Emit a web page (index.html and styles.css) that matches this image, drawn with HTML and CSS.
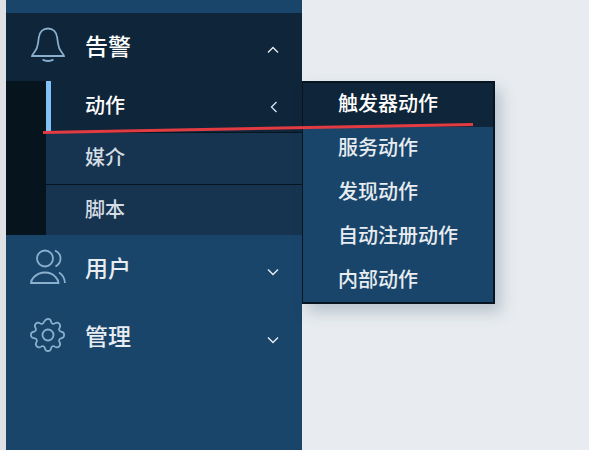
FILE: index.html
```html
<!DOCTYPE html>
<html lang="zh">
<head>
    <meta charset="UTF-8">
    <title>告警</title>
    <link rel="stylesheet" href="styles.css">
</head>
<body>
    <nav class="sidebar">
        <div class="menu-head open">
            <svg class="menu-icon" viewBox="0 0 36 36" fill="none">
                <path d="M2 29c0-1 1-2 2.200-3.500 2-2.500 3.300-5 3.800-9l.8-6C9.500 5 13 1.500 18 1.500S26.500 5 27.200 10.500l.8 6c.5 4 1.800 6.500 3.800 9 1.200 1.500 2.200 2.500 2.200 3.500H2z"/>
                <path d="M12.500 32.500c3 2 8 2 11 0"/>
            </svg>
            <span class="menu-title">告警</span>
            <svg class="chevron" viewBox="0 0 12 8" fill="none"><path d="M1 6.500l5-5 5 5"/></svg>
        </div>

        <div class="submenu">
            <div class="submenu-rail"></div>
            <ul class="submenu-list">
                <li class="submenu-item active">
                    <span>动作</span>
                    <svg class="chevron-left" viewBox="0 0 8 12" fill="none"><path d="M6.500 1l-5 5 5 5"/></svg>
                </li>
                <li class="submenu-item">媒介</li>
                <li class="submenu-item">脚本</li>
            </ul>
        </div>

        <div class="menu-head">
            <svg class="menu-icon" viewBox="0 0 36 36" fill="none">
                <circle cx="15" cy="9.500" r="8"/>
                <path d="M25 1.500c4 1.800 5.500 4.500 5.500 8s-1.500 6-5 8"/>
                <path d="M1 34c0-2 1-4 3-6 3-3 7-4.500 11-4.500s8 1.500 10.500 4.500c2 2 3 4 3 6H1z"/>
                <path d="M29 23.500c3.500 2 5.500 4.500 6 10.500"/>
            </svg>
            <span class="menu-title">用户</span>
            <svg class="chevron" viewBox="0 0 12 8" fill="none"><path d="M1 1.500l5 5 5-5"/></svg>
        </div>

        <div class="menu-head">
            <svg class="menu-icon" viewBox="0 0 36 36" fill="none">
                <path d="M18 1c2 0 3 1.300 3.300 3.200.3 1.800 2.400 2.700 3.900 1.600 1.500-1 3.200-1.100 4.600.3s1.300 3 .3 4.500c-1.100 1.500-.2 3.600 1.600 3.900 1.900.3 3.300 1.500 3.300 3.500s-1.400 3.200-3.300 3.500c-1.800.3-2.700 2.400-1.600 3.900 1 1.500 1.100 3.100-.3 4.500s-3.100 1.300-4.600.3c-1.500-1.100-3.600-.2-3.900 1.600-.3 1.900-1.300 3.200-3.300 3.200s-3-1.300-3.300-3.200c-.3-1.800-2.400-2.700-3.900-1.600-1.500 1-3.200 1.100-4.600-.3s-1.300-3-.3-4.500c1.100-1.500.2-3.600-1.600-3.900C1.400 21.200 0 20 0 18s1.400-3.200 3.300-3.500c1.800-.3 2.700-2.400 1.600-3.900-1-1.500-1.100-3.100.3-4.500s3.100-1.300 4.600-.3c1.500 1.100 3.600.2 3.900-1.600C14.900 2.300 16 1 18 1z" transform="translate(.9 .9) scale(.95)"/>
                <circle cx="18" cy="18" r="5.500"/>
            </svg>
            <span class="menu-title">管理</span>
            <svg class="chevron" viewBox="0 0 12 8" fill="none"><path d="M1 1.500l5 5 5-5"/></svg>
        </div>

        <ul class="flyout">
            <li class="flyout-item active">触发器动作</li>
            <li class="flyout-item">服务动作</li>
            <li class="flyout-item">发现动作</li>
            <li class="flyout-item">自动注册动作</li>
            <li class="flyout-item">内部动作</li>
        </ul>
    </nav>

    <!-- red pen mark drawn over the screenshot -->
    <svg class="pen-mark" viewBox="0 0 589 450"><polygon points="43,131 473,123 473,126 43,134"/></svg>
</body>
</html>
```

FILE: styles.css
```css
:root {
    --page-bg: #e8ecf0;
    --edge-color: #dfe1e5;
    --menu-bg: #1a456b;
    --open-bg: #0f2539;
    --sub-bg: #16344f;
    --rail-bg: #06141d;
    --line-color: #071520;
    --accent-color: #82c1f5;
    --icon-color: #8bb0cd;
    --text-color: #e8edf1;
}

* {
    margin: 0;
    padding: 0;
    box-sizing: border-box;
}

body {
    background-color: var(--page-bg);
    font-family: "Noto Sans CJK SC", "Liberation Sans", sans-serif;
    height: 450px;
    overflow: hidden;
    border-left: 6px solid var(--edge-color);
}

ul {
    list-style: none;
}

.sidebar {
    position: relative;
    width: 296px;
    height: 450px;
    padding-top: 13px;
    background-color: var(--menu-bg);
    color: var(--text-color);
}

.menu-head {
    display: flex;
    align-items: center;
    height: 68px;
    padding: 0 23px 4px 24px;
}

.menu-head.open {
    background-color: var(--open-bg);
    color: #ffffff;
}

.menu-icon {
    width: 36px;
    height: 36px;
    margin-right: 19px;
    stroke: var(--icon-color);
    stroke-width: 1.8;
}

.menu-title {
    flex: 1;
    font-size: 23px;
    font-weight: 500;
}

.chevron {
    width: 12px;
    height: 8px;
    margin-top: 9px;
    stroke: var(--text-color);
    stroke-width: 1.4;
}

.submenu {
    display: flex;
    height: 154px;
}

.submenu-rail {
    width: 40px;
    background-color: var(--rail-bg);
}

.submenu-list {
    flex: 1;
}

.submenu-item {
    display: flex;
    align-items: center;
    justify-content: space-between;
    height: 52px;
    padding: 0 24px 4px 39px;
    background-color: var(--sub-bg);
    border-bottom: 1px solid var(--line-color);
    font-size: 20px;
    font-weight: 500;
    color: #d5dde4;
}

.submenu-item:last-child {
    height: 50px;
    border-bottom: none;
}

.submenu-item.active {
    padding-left: 34px;
    background-color: var(--open-bg);
    border-left: 5px solid var(--accent-color);
    color: #ffffff;
}

.chevron-left {
    width: 8px;
    height: 12px;
    margin-top: 4px;
    stroke: #cfe3f3;
    stroke-width: 1.4;
}

.flyout {
    position: absolute;
    left: 296px;
    top: 81px;
    width: 193px;
    height: 223px;
    background-color: var(--menu-bg);
    border: 2px solid var(--line-color);
    border-left-width: 1px;
    box-shadow: 6px 8px 14px rgba(40, 70, 100, 0.25);
}

.flyout-item {
    height: 44px;
    padding: 0 0 4px 35px;
    font-size: 20px;
    line-height: 40px;
    font-weight: 500;
    color: var(--text-color);
}

.flyout-item.active {
    background-color: var(--open-bg);
    color: #ffffff;
}

.pen-mark {
    position: absolute;
    left: 0;
    top: 0;
    width: 589px;
    height: 450px;
    fill: #e23c42;
}
```
